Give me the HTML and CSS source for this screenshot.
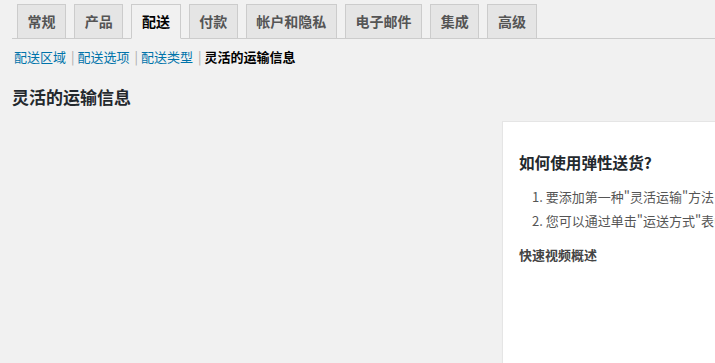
FILE: index.html
```
<!doctype html>
<html lang="zh-CN">
<head>
<meta charset="UTF-8">
<title>灵活的运输信息</title>
<link rel="stylesheet" href="styles.css">
</head>
<body>
<div class="wrap">
	<nav class="nav-tab-wrapper">
		<a class="nav-tab" href="#">常规</a>
		<a class="nav-tab" href="#">产品</a>
		<a class="nav-tab nav-tab-active" href="#">配送</a>
		<a class="nav-tab" href="#">付款</a>
		<a class="nav-tab" href="#">帐户和隐私</a>
		<a class="nav-tab" href="#">电子邮件</a>
		<a class="nav-tab" href="#">集成</a>
		<a class="nav-tab" href="#">高级</a>
	</nav>
	<ul class="subsubsub">
		<li><a href="#">配送区域</a><span class="sep">|</span></li>
		<li><a href="#">配送选项</a><span class="sep">|</span></li>
		<li><a href="#">配送类型</a><span class="sep">|</span></li>
		<li><a class="current" href="#">灵活的运输信息</a></li>
	</ul>
	<h2 class="page-title">灵活的运输信息</h2>
	<div class="columns">
		<div class="main"></div>
		<div class="sidebar">
			<h3>如何使用弹性送货?</h3>
			<ol>
				<li>要添加第一种"灵活运输"方法，请转到"运送区域"，然后添加新的运送方式。</li>
				<li>您可以通过单击"运送方式"表中的"编辑"链接来配置运送方式。</li>
			</ol>
			<h4>快速视频概述</h4>
		</div>
	</div>
</div>
</body>
</html>
```
FILE: styles.css
```
html,body{margin:0;padding:0;overflow:hidden;height:363px;}
body{background:#f1f1f1;color:#444;font-family:"Noto Sans CJK SC","Liberation Sans",sans-serif;font-size:13px;}
a{text-decoration:none;}
.wrap{padding-left:12px;width:1200px;}

.nav-tab-wrapper{display:flex;gap:8px;padding:4px 0 0 5px;border-bottom:1px solid #ccc;height:34px;box-sizing:content-box;}
.nav-tab{display:block;height:24px;line-height:24px;padding:4px 9.6px 5px;border:1px solid #ccc;background:#e5e5e5;color:#555;font-size:14px;font-weight:700;margin-bottom:-1px;}
.nav-tab-active{background:#f1f1f1;border-bottom-color:#f1f1f1;color:#000;}

.subsubsub{list-style:none;margin:8px 0 0 2px;padding:0;display:flex;line-height:20px;font-size:13px;}
.subsubsub a{color:#0073aa;}
.subsubsub a.current{color:#000;font-weight:700;}
.subsubsub .sep{color:#aaa;margin:0 3px 0 5px;}

.page-title{margin:20px 0 0;font-size:17px;line-height:20px;color:#23282d;font-weight:700;}

.columns{display:grid;grid-template-columns:490px 600px;margin-top:14px;}
.sidebar{background:#fff;border:1px solid #e5e5e5;box-shadow:0 1px 1px rgba(0,0,0,.04);min-height:400px;padding:0 16px;}
.sidebar h3{margin:29px 0 0;font-size:15.6px;line-height:22px;color:#23282d;font-weight:700;}
.sidebar ol{margin:12px 0 0;padding:0 0 0 13px;list-style-position:inside;line-height:24px;color:#555;white-space:nowrap;}
.sidebar h4{margin:12px 0 0;font-size:13px;line-height:20px;color:#444;font-weight:700;}
```
